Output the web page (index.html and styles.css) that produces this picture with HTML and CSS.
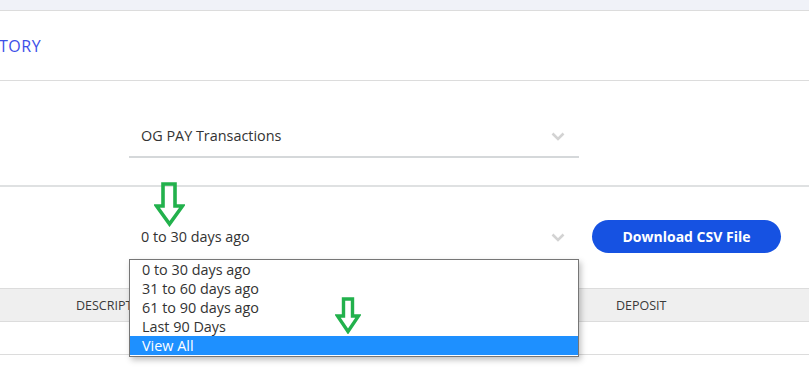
FILE: index.html
```html
<!DOCTYPE html>
<html lang="en">
    <head>
        <meta charset="UTF-8" />
        <meta name="viewport" content="width=device-width, initial-scale=1.0" />
        <title>Transaction History</title>
        <link rel="stylesheet" href="styles.css">
    </head>
    <body>
        <div class="topbar"></div>
        <div class="page-title">
            <h1>TORY</h1>
        </div>
        <div class="filter-row filter-type">
            <div class="select">
                <span>OG PAY Transactions</span>
                <svg class="chevron" width="14" height="9" viewBox="0 0 14 9">
                    <path d="M1.5 1.5 L7 7 L12.5 1.5" fill="none" stroke="#d3d3d3" stroke-width="2.6" />
                </svg>
            </div>
        </div>
        <div class="filter-row filter-range">
            <svg class="hint-arrow arrow-one" width="31" height="45" viewBox="0 0 31 45">
                <path d="M9 2 H21 V24 H28.5 L15.5 42 L2.5 24 H9 Z" fill="none" stroke="#22b14c" stroke-width="3.6" />
            </svg>
            <div class="select">
                <span>0 to 30 days ago</span>
                <svg class="chevron" width="14" height="9" viewBox="0 0 14 9">
                    <path d="M1.5 1.5 L7 7 L12.5 1.5" fill="none" stroke="#d3d3d3" stroke-width="2.6" />
                </svg>
            </div>
            <button type="button" class="download-button">Download CSV File</button>
            <ul class="dropdown">
                <li>0 to 30 days ago</li>
                <li>31 to 60 days ago</li>
                <li>61 to 90 days ago</li>
                <li>Last 90 Days</li>
                <li class="selected">View All</li>
            </ul>
            <svg class="hint-arrow arrow-two" width="26" height="37" viewBox="0 0 26 37">
                <path d="M8.5 2 H17.5 V19 H23.5 L13 34.5 L2.5 19 H8.5 Z" fill="none" stroke="#22b14c" stroke-width="3.4" />
            </svg>
        </div>
        <div class="table">
            <div class="table-head">
                <div class="cell">DESCRIPTION</div>
                <div class="cell"></div>
                <div class="cell">DEPOSIT</div>
            </div>
            <div class="table-row"></div>
        </div>
    </body>
</html>
```

FILE: styles.css
```css
* {
    box-sizing: border-box;
    padding: 0;
    margin: 0;
}

body {
    font-family: "Open Sans", "Liberation Sans", sans-serif;
    background-color: #ffffff;
    color: #333;
    width: 809px;
    height: 371px;
    overflow: hidden;
}

.topbar {
    height: 11px;
    background-color: #f0f2f8;
    border-bottom: 1px solid #dcdcdc;
}

.page-title {
    height: 70px;
    border-bottom: 1px solid #dcdcdc;
    padding-top: 24px;
}
.page-title h1 {
    font-size: 16px;
    font-weight: 400;
    color: #3d4fe8;
    letter-spacing: 0.5px;
    margin-left: -1px;
}

.filter-row {
    position: relative;
    display: flex;
    align-items: center;
    padding-left: 129px;
}

.filter-type {
    height: 106px;
    border-bottom: 2px solid #dfe1e2;
    padding-top: 2px;
}

.select {
    width: 450px;
    height: 43px;
    display: flex;
    align-items: center;
    justify-content: space-between;
    padding: 0 14px 0 12px;
    font-size: 14.4px;
    color: #333;
}
.filter-type .select {
    border-bottom: 2px solid #d5d8da;
    margin-top: 4px;
}
.chevron {
    margin-top: 2px;
}

.filter-range {
    height: 101px;
}
.filter-range .select {
    margin-top: -2px;
}

.download-button {
    background-color: #1652e2;
    border: none;
    border-radius: 17px;
    color: white;
    font-family: "Open Sans", sans-serif;
    font-weight: 700;
    font-size: 14px;
    width: 189px;
    height: 33px;
    margin-left: 13px;
    margin-top: -2px;
    cursor: pointer;
}

.hint-arrow {
    position: absolute;
    z-index: 3;
}
.arrow-one {
    left: 154px;
    top: -5px;
}
.arrow-two {
    left: 335px;
    top: 110px;
}

.dropdown {
    position: absolute;
    z-index: 2;
    left: 129px;
    top: 72px;
    width: 450px;
    list-style: none;
    background: white;
    border: 1px solid #767676;
    padding-bottom: 1px;
    box-shadow: 2px 3px 6px rgba(0, 0, 0, 0.25);
}
.dropdown li {
    height: 19px;
    line-height: 19px;
    padding-left: 12px;
    font-size: 14.4px;
    color: #333;
}
.dropdown li.selected {
    background-color: #1e90ff;
    color: white;
}

.table-head {
    display: flex;
    height: 34px;
    background-color: #efefef;
    border-top: 1px solid #dcdcdc;
    border-bottom: 1px solid #dcdcdc;
    padding-left: 76px;
    align-items: center;
}
.table-head .cell {
    flex: 0 0 270px;
    font-size: 12.5px;
    color: #3a3a3a;
}
.table-head .cell:last-child {
    flex: 1 1 auto;
}
.table-row {
    height: 33px;
    border-bottom: 1px solid #dcdcdc;
}
```
